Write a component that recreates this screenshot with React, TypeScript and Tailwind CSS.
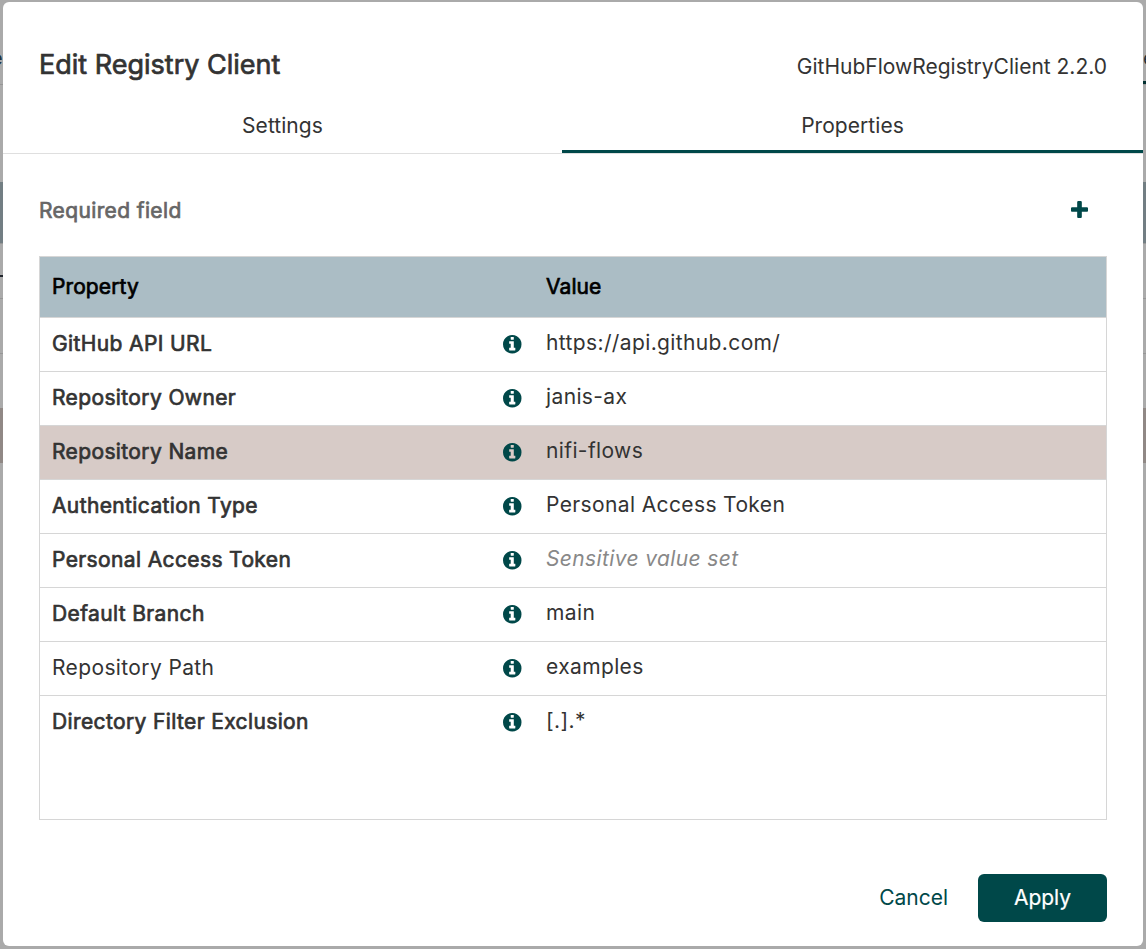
import React from "react";

const faux = "[-webkit-text-stroke:0.7px_currentColor]";

function InfoIcon() {
  return (
    <svg className="h-[18.5px] w-[18.5px] shrink-0 fill-[#004849]" viewBox="128 128 1536 1536">
      <path d="M1152 1376v-160q0-14-9-23t-23-9h-96v-512q0-14-9-23t-23-9h-320q-14 0-23 9t-9 23v160q0 14 9 23t23 9h96v320h-96q-14 0-23 9t-9 23v160q0 14 9 23t23 9h448q14 0 23-9t9-23zm-128-896v-160q0-14-9-23t-23-9h-192q-14 0-23 9t-9 23v160q0 14 9 23t23 9h192q14 0 23-9t9-23zm640 416q0 209-103 385.5t-279.5 279.5-385.5 103-385.5-103-279.5-279.5-103-385.5 103-385.5 279.5-279.5 385.5-103 385.5 103 279.5 279.5 103 385.5z" />
    </svg>
  );
}

function PlusIcon() {
  return (
    <svg className="mb-[2px] h-[17px] w-[17px] fill-[#004849]" viewBox="192 128 1408 1408">
      <path d="M1600 736v192q0 40-28 68t-68 28h-416v416q0 40-28 68t-68 28h-192q-40 0-68-28t-28-68v-416h-416q-40 0-68-28t-28-68v-192q0-40 28-68t68-28h416v-416q0-40 28-68t68-28h192q40 0 68 28t28 68v416h416q40 0 68 28t28 68z" />
    </svg>
  );
}

type Row = { name: string; value: string; required?: boolean; selected?: boolean; sensitive?: boolean };

const rows: Row[] = [
  { name: "GitHub API URL", value: "https://api.github.com/", required: true },
  { name: "Repository Owner", value: "janis-ax", required: true },
  { name: "Repository Name", value: "nifi-flows", required: true, selected: true },
  { name: "Authentication Type", value: "Personal Access Token", required: true },
  { name: "Personal Access Token", value: "Sensitive value set", required: true, sensitive: true },
  { name: "Default Branch", value: "main", required: true },
  { name: "Repository Path", value: "examples" },
  { name: "Directory Filter Exclusion", value: "[.].*", required: true },
];

function PropertyRow({ row }: { row: Row }) {
  return (
    <div
      className={`flex h-[54px] items-center border-b border-[#d6d6d6] pl-3 last:border-transparent ${
        row.selected ? "bg-[#d7cbc7]" : ""
      }`}
    >
      <div className={`w-[451px] pb-px tracking-[0.375px] ${row.required ? faux : ""}`}>{row.name}</div>
      <InfoIcon />
      <div
        className={`ml-[24.5px] pb-[3px] tracking-[0.375px] ${row.sensitive ? "italic text-[#888]" : ""}`}
      >
        {row.value}
      </div>
    </div>
  );
}

function Backdrop({ right = false }: { right?: boolean }) {
  return (
    <div className="flex h-full w-[3px] flex-col overflow-hidden">
      <div className="h-[81px] pt-[48px] text-[20px] leading-5 text-[#20323a]">
        <span className={right ? "" : "ml-[-9px]"}>e</span>
      </div>
      <div className={right ? "h-[3px] bg-[#002f30]" : "h-[3px]"} />
      <div className="h-px bg-[#969696]" />
      <div className="h-[97px]" />
      <div className="h-[61px] bg-[#727e83]" />
      <div className="h-px bg-[#969696]" />
      <div className="h-[31px]" />
      <div className={right ? "h-[2px]" : "h-[2px] bg-[#20242c]"} />
      <div className="h-[21px]" />
      <div className="h-px bg-[#969696]" />
      <div className="h-[54px]" />
      <div className="h-px bg-[#969696]" />
      <div className="h-[54px]" />
      <div className="h-[55px] bg-[#908885]" />
    </div>
  );
}

export default function App() {
  return (
    <div className="flex h-[949px] w-[1146px] overflow-hidden bg-[#aaaaaa] font-['Inter',sans-serif] text-[21px] leading-[30px] text-[#333333]">
      <Backdrop />
      <div className="mt-[2px] flex h-[944px] w-[1140px] flex-col rounded-[6px] bg-white">
        <div className="flex h-[93px] items-start justify-between px-9 pt-[45px]">
          <h2 className={`text-[27px] leading-9 ${faux}`}>Edit Registry Client</h2>
          <div className="pt-[5px]">GitHubFlowRegistryClient 2.2.0</div>
        </div>

        <div className="flex h-[59px] border-b border-[#dfdfdf]">
          <div className="flex w-[559px] justify-center pt-4 tracking-[0.05px]">Settings</div>
          <div className="flex w-[581px] justify-center border-b-[3px] border-[#004849] pt-4 tracking-[0.05px]">
            Properties
          </div>
        </div>

        <div className="flex h-[102px] items-center justify-between pl-9 pr-[55px] pt-[11px]">
          <div className={`tracking-[0.375px] text-[#666666] ${faux}`}>Required field</div>
          <PlusIcon />
        </div>

        <div className="mx-9 h-[564px] border border-[#d6d6d6]">
          <div
            className={`flex h-[61px] items-center border-b border-[#d6d6d6] bg-[#abbdc5] pl-3 tracking-[0.1px] text-black ${faux}`}
          >
            <div className="w-[494px]">Property</div>
            <div>Value</div>
          </div>
          {rows.map((row) => (
            <PropertyRow key={row.name} row={row} />
          ))}
        </div>

        <div className="flex items-center justify-end gap-[30px] px-9 pt-[54px]">
          <button className="text-[#004849]">Cancel</button>
          <button className="h-12 w-[129px] rounded-[6px] bg-[#004849] text-white [-webkit-text-stroke:0.2px_currentColor]">
            Apply
          </button>
        </div>
      </div>
      <Backdrop right />
    </div>
  );
}
